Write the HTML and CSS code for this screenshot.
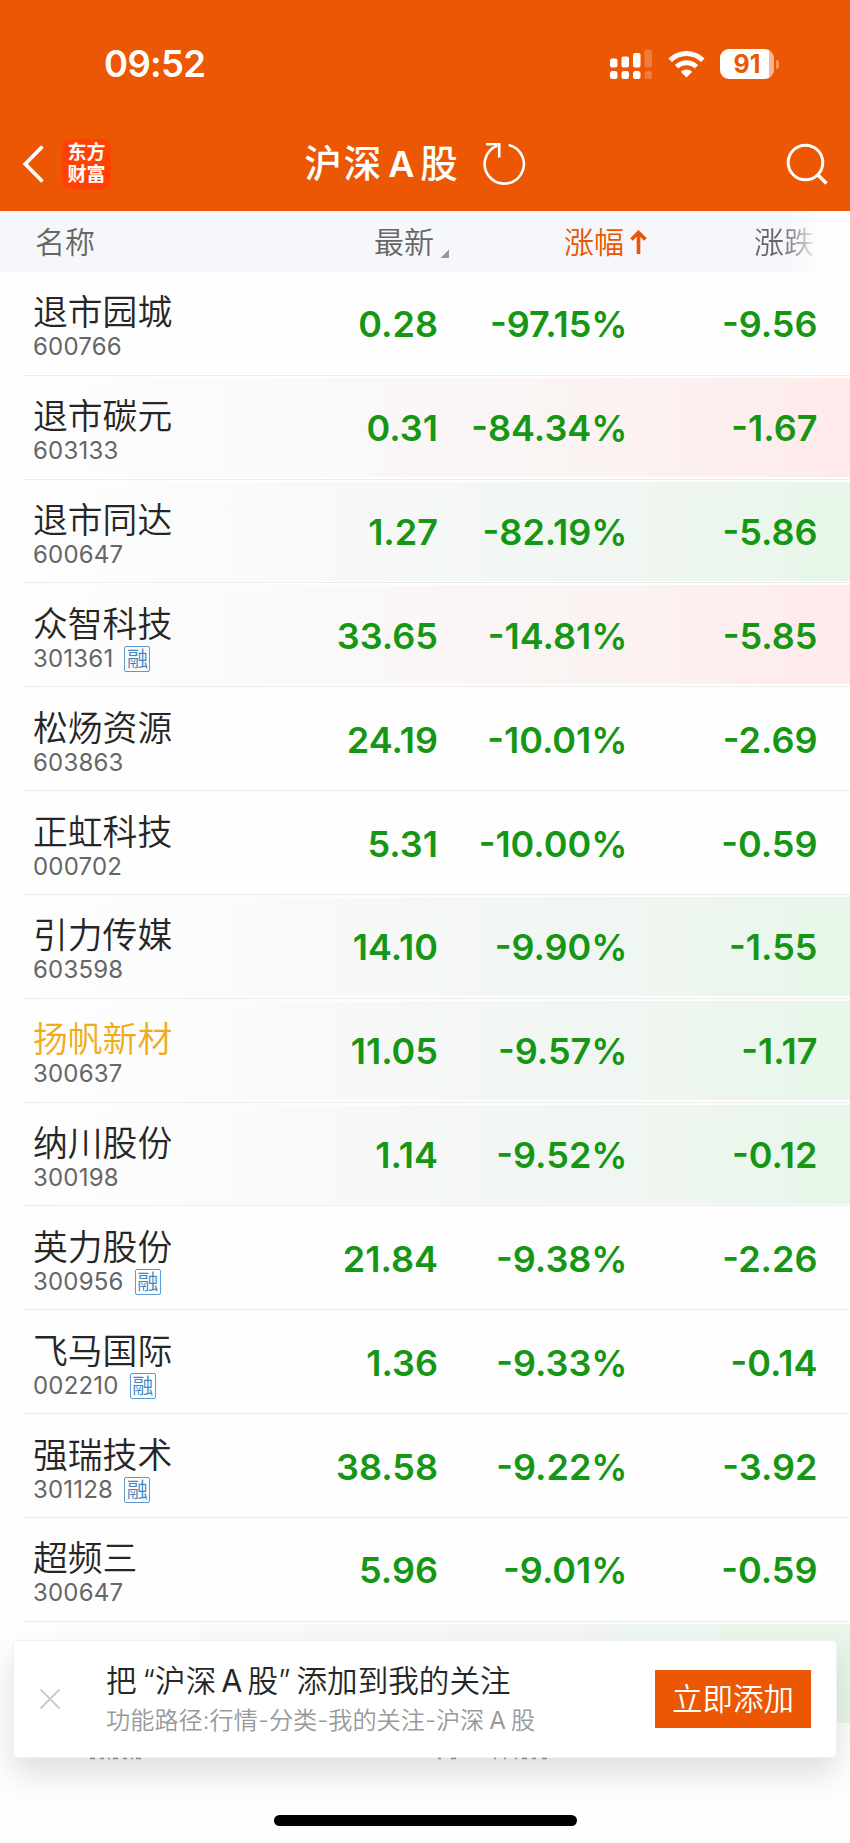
FILE: index.html
```html
<!DOCTYPE html>
<html lang="zh-CN">
<head>
    <meta charset="UTF-8">
    <meta name="viewport" content="width=device-width, initial-scale=1.0">
    <title>沪深A股</title>
    <link rel="stylesheet" href="styles.css">
</head>
<body>
    <div class="app">
        <header class="header">
            <div class="status-bar">
                <span class="time">09:52</span>
                <div class="status-icons">
                    <svg class="signal" width="43" height="31" viewBox="0 0 43 31">
                        <g fill="#fff">
                            <rect x="0" y="9.500" width="7.500" height="9" rx="2"/>
                            <rect x="11.500" y="7.500" width="7.500" height="11" rx="2"/>
                            <rect x="23" y="4" width="7.500" height="14.500" rx="2"/>
                            <rect x="0" y="22" width="7.500" height="8" rx="2.500"/>
                            <rect x="11.500" y="22" width="7.500" height="8" rx="2.500"/>
                            <rect x="23" y="22" width="7.500" height="8" rx="2.500"/>
                        </g>
                        <g fill="#fff" opacity="0.22">
                            <rect x="34.500" y="0.500" width="7.500" height="18" rx="2"/>
                            <rect x="34.500" y="22" width="7.500" height="8" rx="2.500"/>
                        </g>
                    </svg>
                    <svg class="wifi" width="37" height="28" viewBox="0 0 37 28">
                        <g fill="none" stroke="#fff" stroke-width="5">
                            <path d="M2.200 10.200A23 23 0 0 1 34.800 10.200"/>
                            <path d="M8.600 16.800A14.200 14.200 0 0 1 28.400 16.800"/>
                        </g>
                        <path fill="#fff" d="M18.500 27.500L12.800 21.800A8.200 8.200 0 0 1 24.200 21.800Z"/>
                    </svg>
                    <div class="battery"><span class="battery-body">91</span><i class="battery-tip"></i></div>
                </div>
            </div>
            <div class="nav-bar">
                <div class="nav-left">
                    <svg width="22" height="38" viewBox="0 0 22 38" fill="none" stroke="#fff" stroke-width="3.800">
                        <path d="M20.500 1.500L3.300 19L20.500 36.500"/>
                    </svg>
                    <div class="logo"><span>东方</span><span>财富</span></div>
                </div>
                <div class="nav-title">
                    <h1>沪深<b>A</b>股</h1>
                    <svg width="44" height="44" viewBox="0 0 44 44" fill="none" stroke="#fff" stroke-width="2.600">
                        <path d="M26.700 2.900A19.600 19.600 0 1 1 15.500 3.600"/>
                        <path d="M4 2.300H17.200V15.500"/>
                    </svg>
                </div>
                <svg class="search" width="42" height="42" viewBox="0 0 42 42" fill="none" stroke="#fff" stroke-width="3">
                    <circle cx="19.500" cy="19.500" r="17.300"/>
                    <path d="M31.500 31.500L40.500 40.500" stroke-width="3.600"/>
                </svg>
            </div>
        </header>

        <div class="table-head">
            <span class="th-name">名称</span>
            <span class="th-last">最新<i class="corner"></i></span>
            <span class="th-pct">涨幅<svg width="17" height="24" viewBox="0 0 17 24" fill="none" stroke="#e85504" stroke-width="3.600"><path d="M8.500 24V3M1.500 9.500L8.500 2.500L15.500 9.500"/></svg></span>
            <span class="th-diff">涨跌</span>
        </div>

        <main class="list">
            <div class="row"><div class="stock"><p class="name">退市园城</p><p class="code">600766</p></div><span class="num">0.28</span><span class="num">-97.15%</span><span class="num">-9.56</span></div>
            <div class="row up"><div class="stock"><p class="name">退市碳元</p><p class="code">603133</p></div><span class="num">0.31</span><span class="num">-84.34%</span><span class="num">-1.67</span></div>
            <div class="row down"><div class="stock"><p class="name">退市同达</p><p class="code">600647</p></div><span class="num">1.27</span><span class="num">-82.19%</span><span class="num">-5.86</span></div>
            <div class="row up"><div class="stock"><p class="name">众智科技</p><p class="code">301361<span class="tag">融</span></p></div><span class="num">33.65</span><span class="num">-14.81%</span><span class="num">-5.85</span></div>
            <div class="row"><div class="stock"><p class="name">松炀资源</p><p class="code">603863</p></div><span class="num">24.19</span><span class="num">-10.01%</span><span class="num">-2.69</span></div>
            <div class="row"><div class="stock"><p class="name">正虹科技</p><p class="code">000702</p></div><span class="num">5.31</span><span class="num">-10.00%</span><span class="num">-0.59</span></div>
            <div class="row down"><div class="stock"><p class="name">引力传媒</p><p class="code">603598</p></div><span class="num">14.10</span><span class="num">-9.90%</span><span class="num">-1.55</span></div>
            <div class="row down"><div class="stock"><p class="name marked">扬帆新材</p><p class="code">300637</p></div><span class="num">11.05</span><span class="num">-9.57%</span><span class="num">-1.17</span></div>
            <div class="row down"><div class="stock"><p class="name">纳川股份</p><p class="code">300198</p></div><span class="num">1.14</span><span class="num">-9.52%</span><span class="num">-0.12</span></div>
            <div class="row"><div class="stock"><p class="name">英力股份</p><p class="code">300956<span class="tag">融</span></p></div><span class="num">21.84</span><span class="num">-9.38%</span><span class="num">-2.26</span></div>
            <div class="row"><div class="stock"><p class="name">飞马国际</p><p class="code">002210<span class="tag">融</span></p></div><span class="num">1.36</span><span class="num">-9.33%</span><span class="num">-0.14</span></div>
            <div class="row"><div class="stock"><p class="name">强瑞技术</p><p class="code">301128<span class="tag">融</span></p></div><span class="num">38.58</span><span class="num">-9.22%</span><span class="num">-3.92</span></div>
            <div class="row"><div class="stock"><p class="name">超频三</p><p class="code">300647</p></div><span class="num">5.96</span><span class="num">-9.01%</span><span class="num">-0.59</span></div>
            <div class="row down last"></div>
        </main>

        <div class="toast">
            <svg class="close" width="20" height="20" viewBox="0 0 20 20" stroke="#ccc" stroke-width="2"><path d="M0.500 0.500L19.500 19.500M19.500 0.500L0.500 19.500"/></svg>
            <div class="toast-text">
                <p class="toast-title">把<span class="quote-l">“</span>沪深<b>A</b>股<span class="quote-r">”</span>添加到我的关注</p>
                <p class="toast-path">功能路径:行情-分类-我的关注-沪深<b>A</b>股</p>
            </div>
            <button class="toast-btn">立即添加</button>
        </div>
        <!-- bottom edge of the index ticker, mostly covered by the toast -->
        <svg class="ticker-edge" width="470" height="3" viewBox="0 0 470 3" stroke="#8c8c8c" stroke-width="1.500">
            <path d="M0 1.500H54" stroke-dasharray="5 5 4 4 2 3"/>
            <path d="M348 1.500H351M361 1.500H366M404 1.500H406M414 1.500H416M425 1.500H427M432 1.500H437M442 1.500H446M452 1.500H457"/>
        </svg>
        <div class="home-indicator"></div>
    </div>
</body>
</html>
```

FILE: styles.css
```css
* {
    margin: 0;
    padding: 0;
    box-sizing: border-box;
}
body {
    font-family: Inter, "Noto Sans CJK SC", sans-serif;
    background: #fefefe;
    width: 850px;
    height: 1843px;
    overflow: hidden;
}
.app {
    position: relative;
    height: 1843px;
    overflow: hidden;
}
svg {
    display: block;
    flex: none;
}
.header {
    height: 211px;
    background: #eb5703;
    color: #fff;
}
.status-bar {
    height: 116px;
    padding: 12px 71px 0 104px;
    display: flex;
    align-items: center;
    justify-content: space-between;
}
.time {
    font-size: 36.5px;
    font-weight: 600;
    line-height: 40px;
    letter-spacing: -0.7px;
}
.status-icons {
    display: flex;
    align-items: center;
}
.wifi {
    margin-left: 15px;
}
.battery {
    display: flex;
    align-items: center;
    margin-left: 15px;
}
.battery-body {
    width: 54px;
    height: 30px;
    border-radius: 9px;
    background: linear-gradient(90deg, #fff 49px, #f9b591 49px);
    color: #eb5703;
    font-size: 25px;
    font-weight: 700;
    line-height: 30px;
    text-align: center;
}
.battery-tip {
    width: 3px;
    height: 9px;
    margin-left: 2px;
    border-radius: 0 3px 3px 0;
    background: #f5965f;
}
.nav-bar {
    height: 95px;
    padding: 0 22px;
    display: grid;
    grid-template-columns: 1fr auto 1fr;
    align-items: center;
}
.nav-left {
    display: flex;
    align-items: center;
    gap: 18px;
}
.logo {
    width: 49px;
    height: 50px;
    border-radius: 8px;
    background: #ff4204;
    font-size: 19px;
    font-weight: 700;
    line-height: 22px;
    display: flex;
    flex-direction: column;
    align-items: center;
    justify-content: center;
}
.nav-title {
    display: flex;
    align-items: center;
    gap: 22px;
    margin-right: 20px;
}
.nav-title h1 {
    font-size: 37.5px;
    font-weight: 500;
    line-height: 50px;
    letter-spacing: 2px;
}
.nav-title b {
    font-size: 36px;
    font-weight: 600;
    margin: 0 4px 0 5px;
}
.search {
    justify-self: end;
}
.table-head {
    height: 61px;
    background: linear-gradient(90deg, #f6f7fb 785px, #fefefe 825px);
    color: #666;
    font-size: 30px;
    font-weight: 350;
    line-height: 62px;
    display: grid;
    grid-template-columns: 437px 190px 190px 33px;
}
.th-name {
    grid-area: 1 / 1;
    padding-left: 35px;
}
.th-last {
    grid-area: 1 / 1;
    justify-self: end;
    margin-right: -12px;
    display: flex;
}
.corner {
    width: 8px;
    height: 8px;
    margin: 39px 0 0 7px;
    background: linear-gradient(135deg, transparent 50%, #999 50%);
}
.th-pct {
    grid-column: 2;
    justify-self: end;
    margin-right: -20px;
    color: #e85504;
    display: flex;
    align-items: center;
    gap: 6px;
}
.th-diff {
    grid-column: 3;
    justify-self: end;
    margin-right: 3px;
    color: transparent;
    background: linear-gradient(90deg, #666 45%, #e4e4e4);
    background-clip: text;
}
.row {
    position: relative;
    height: 103.83px;
    display: grid;
    grid-template-columns: 248px 190px 189.5px 190px;
    align-items: center;
}
/* divider starts a little in from the left edge */
.row::after {
    content: "";
    position: absolute;
    left: 24px;
    right: 0;
    bottom: 0;
    height: 1px;
    background: #ececec;
}
.row.last::after {
    display: none;
}
.row.up {
    background: linear-gradient(90deg, #fefefe 10px, #faf8f8 40%, #fbf3f2 72%, #ffeaea) 0 2px / 100% 99px no-repeat;
}
.row.down {
    background: linear-gradient(90deg, #fefefe 10px, #f7f9f8 40%, #f1f6f2 72%, #e8f6e9) 0 2px / 100% 99px no-repeat;
}
.stock {
    padding: 6px 0 0 33px;
    white-space: nowrap;
}
.name {
    font-size: 34.8px;
    font-weight: 350;
    line-height: 41px;
    color: #262626;
}
.name.marked {
    color: #f0ab18;
}
.code {
    height: 28px;
    display: flex;
    align-items: center;
    font-size: 24px;
    line-height: 28px;
    letter-spacing: 0.2px;
    color: #666;
}
.tag {
    width: 26px;
    height: 26px;
    margin-left: 11px;
    border: 1.5px solid #5b9bcf;
    border-radius: 2px;
    color: #3c86c4;
    font-size: 21px;
    font-weight: 350;
    line-height: 23px;
    letter-spacing: 0;
    text-align: center;
}
.num {
    padding-top: 1px;
    font-size: 36px;
    font-weight: 600;
    line-height: 44px;
    color: #159615;
    text-align: right;
}
.toast {
    position: absolute;
    left: 13px;
    right: 13px;
    top: 1640px;
    height: 118px;
    padding: 0 25px 0 26px;
    background: #fff;
    border: 1px solid #f0f0f0;
    border-radius: 5px;
    box-shadow: 0 16px 32px rgba(0, 0, 0, 0.13);
    display: flex;
    align-items: center;
}
.toast-text {
    flex: 1;
    margin-left: 46px;
    white-space: nowrap;
    font-weight: 350;
}
.toast b {
    font-weight: 400;
    margin: 0 5px;
}
.toast-title {
    font-size: 30.6px;
    line-height: 42px;
    color: #262626;
}
.toast-path {
    font-size: 24.2px;
    line-height: 37px;
    color: #999;
}
.quote-l {
    margin-left: 6px;
}
.quote-r {
    margin-right: 6px;
}
.toast-btn {
    width: 156px;
    height: 58px;
    border: none;
    background: #eb5703;
    color: #fff;
    font-family: inherit;
    font-size: 30.5px;
    font-weight: 350;
    line-height: 58px;
}
.ticker-edge {
    position: absolute;
    left: 90px;
    top: 1757px;
}
.home-indicator {
    position: absolute;
    left: 274px;
    top: 1815px;
    width: 303px;
    height: 11px;
    border-radius: 6px;
    background: #000;
}
```
